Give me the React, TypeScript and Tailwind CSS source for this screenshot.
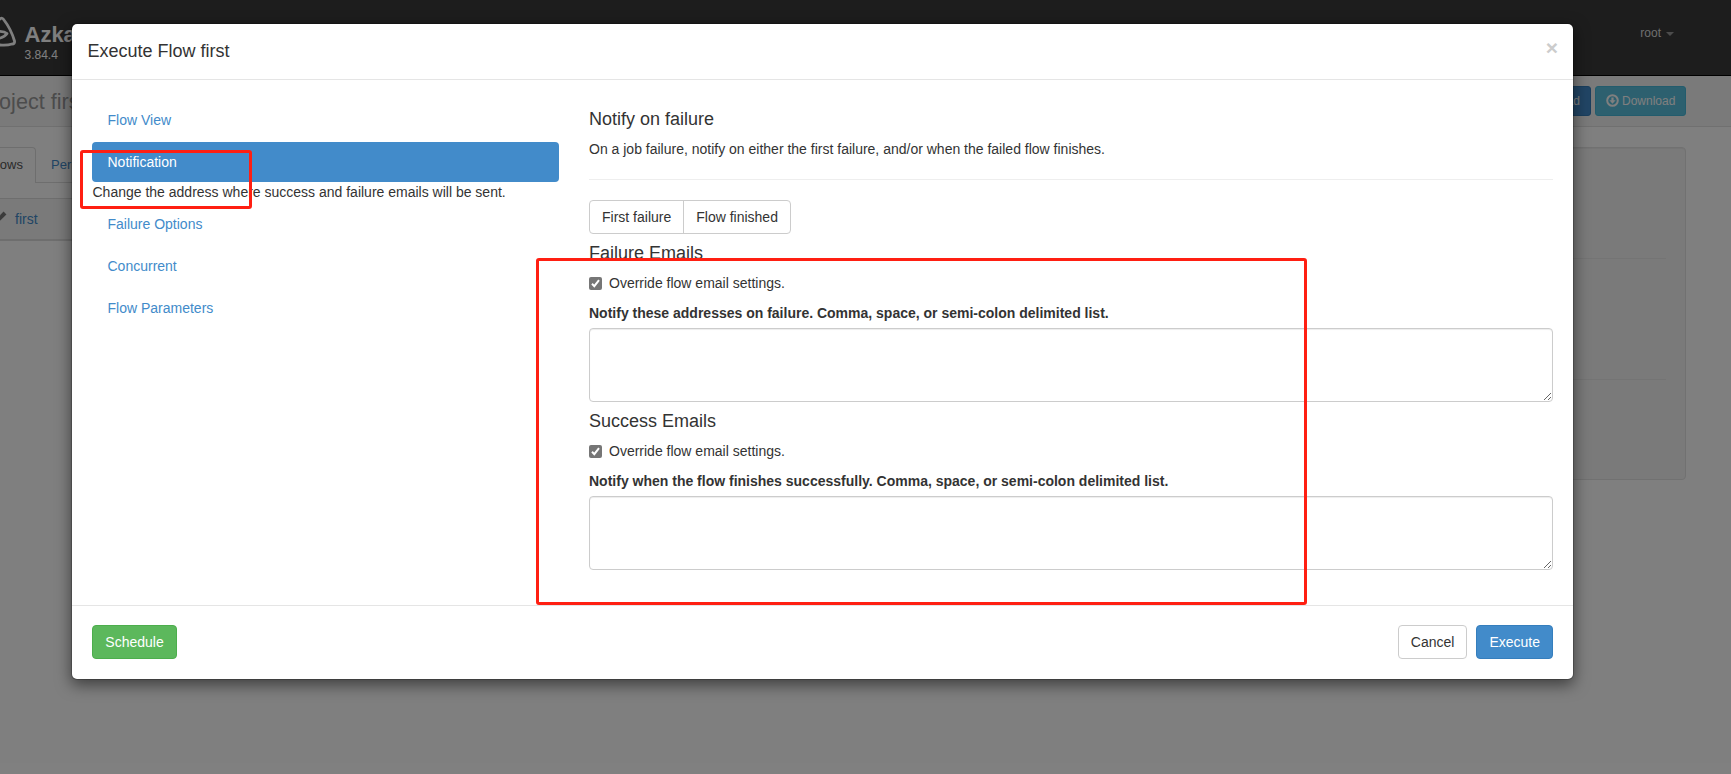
import React from 'react';

interface EmailSectionProps {
  title: string;
  label: string;
}

const EmailSection: React.FC<EmailSectionProps> = ({ title, label }) => {
  return (
    <div className="pt-[9px]">
      <h4 className="text-lg leading-5 mb-2.5">{title}</h4>
      <label className="flex h-5 mb-2.5 leading-5">
        <svg viewBox="0 0 13 13" className="w-[13px] h-[13px] mt-1 mr-[7px]">
          <rect width="13" height="13" rx="2" fill="#767676" />
          <path d="M3 6.8 L5.3 9.2 L10 3.2" fill="none" stroke="#fff" strokeWidth="2" />
        </svg>
        Override flow email settings.
      </label>
      <div className="font-bold leading-5 mb-[5px]">{label}</div>
      <textarea className="block w-full h-[74px] resize border border-[#ccc] rounded bg-white shadow-[inset_0_1px_1px_rgba(0,0,0,0.075)]" />
    </div>
  );
};

const Backdrop: React.FC = () => {
  return (
    <div className="h-[774px] overflow-hidden bg-white">
      <header className="h-[76px] bg-[#3a3a3a] border-b border-black flex justify-between">
        <div className="flex w-[237px]">
          <svg viewBox="0 0 17 32" className="w-[17px] h-8 mt-4" fill="none" stroke="#fff" strokeWidth="2.8" strokeLinejoin="round">
            <path d="M-4 6 L0 3 Q2 1 4 4 Q11 13 14.5 25 Q15 28 12 28 Q6 30 -4 28.5" />
            <path d="M-3 15.5 Q4 15 7 17.5 Q5 21 -3 23" />
          </svg>
          <div className="ml-[7.5px] mt-[22px] text-white">
            <div className="text-[22px] leading-[25px] font-bold">Azkaban</div>
            <div className="text-xs leading-4">3.84.4</div>
          </div>
        </div>
        <div className="flex items-start mr-[57px] mt-6 text-xs leading-[18px] text-[#ddd]">
          root
          <span className="ml-[5px] mt-2 border-x-4 border-t-4 border-x-transparent border-t-[#999]" />
        </div>
      </header>

      <div className="h-[51px] bg-[#f5f5f5] border-b border-[#e0e0e0] flex justify-between">
        <h1 className="-ml-[22.5px] mt-[11px] text-[21.6px] leading-[30px] text-[#999]">Project first</h1>
        <div className="flex mt-2.5 mr-[45px] gap-1 text-xs text-white">
          <div className="flex items-center h-[30px] px-2.5 rounded-[3px] bg-[#428bca] border border-[#357ebd]">Upload</div>
          <div className="flex items-center w-[91px] h-[30px] pl-2.5 gap-[3px] rounded-[3px] bg-[#5bc0de] border border-[#46b8da]">
            <svg viewBox="0 0 13 13" className="w-[13px] h-[13px] -mt-0.5">
              <circle cx="6.5" cy="6.5" r="5.3" fill="none" stroke="#fff" strokeWidth="2" />
              <path d="M5.4 3.5 H7.6 V6.3 H9.6 L6.5 9.8 L3.4 6.3 H5.4 Z" fill="#fff" />
            </svg>
            Download
          </div>
        </div>
      </div>

      <div className="flex justify-between pt-5 pr-[45px]">
        <div className="w-[1200px]">
          <div className="flex text-[13px] leading-5">
            <div className="w-9 h-9 pt-[7px] border-t border-r border-[#ddd] rounded-tr text-[#555]">
              <span className="-ml-[11px]">Flows</span>
            </div>
            <div className="flex-1 h-9 pt-2 pl-[15px] border-b border-[#ddd] text-[#428bca]">Permissions</div>
          </div>
          <div className="flex items-center mt-[15px] h-[43px] bg-[#f5f5f5] border-t border-b-2 border-[#ddd] text-sm text-[#428bca]">
            <svg viewBox="0 0 15 12" className="w-[15px] h-3 -mt-1">
              <path d="M-3 10 L5 2" stroke="#777" strokeWidth="4" />
            </svg>
            first
          </div>
        </div>
        <div className="w-[360px] h-[333px] px-[19px] rounded bg-[#f5f5f5] border border-[#e3e3e3] shadow-[inset_0_1px_1px_rgba(0,0,0,0.05)]">
          <div className="h-[111px] border-b border-[#e8e8e8]" />
          <div className="h-[121px] border-b border-[#e8e8e8]" />
        </div>
      </div>
    </div>
  );
};

const App: React.FC = () => {
  const after = ['Failure Options', 'Concurrent', 'Flow Parameters'];

  return (
    <div className="relative h-[774px] overflow-hidden font-['Liberation_Sans',Arial,sans-serif] text-sm text-[#333]">
      <Backdrop />
      <div className="absolute inset-0 bg-black/50" />

      <div className="absolute left-[71px] top-[23px] w-[1503px] h-[657px] flex flex-col rounded-md bg-white bg-clip-padding border border-black/20 shadow-[0_5px_15px_rgba(0,0,0,0.5)]">
        <div className="flex justify-between h-14 pl-[15.5px] pr-[15px] pt-[15px] border-b border-[#e5e5e5]">
          <h4 className="text-lg leading-[25px]">Execute Flow first</h4>
          <span className="text-[21px] leading-[21px] -mt-0.5 font-bold text-[#ccc]">×</span>
        </div>

        <div className="flex-1 flex gap-[30px] px-5 pt-5">
          <ul className="w-[467px] flex flex-col gap-0.5 leading-5 text-[#428bca]">
            <li className="px-[15.5px] py-2.5">Flow View</li>
            <li>
              <div className="px-[15.5px] py-2.5 rounded bg-[#428bca] text-white">Notification</div>
              <p className="pl-[0.5px] text-[#333]">Change the address where success and failure emails will be sent.</p>
            </li>
            {after.map((item) => (
              <li key={item} className="px-[15.5px] py-2.5">{item}</li>
            ))}
          </ul>

          <div className="flex-1">
            <h4 className="mt-[9px] text-lg leading-5">Notify on failure</h4>
            <p className="mt-2.5 leading-5">On a job failure, notify on either the first failure, and/or when the failed flow finishes.</p>
            <hr className="my-5 border-[#eee]" />
            <div className="inline-flex h-[34px] leading-8 align-top border border-[#ccc] rounded">
              <div className="px-3 border-r border-[#ccc]">First failure</div>
              <div className="px-3">Flow finished</div>
            </div>
            <EmailSection title="Failure Emails" label="Notify these addresses on failure. Comma, space, or semi-colon delimited list." />
            <EmailSection title="Success Emails" label="Notify when the flow finishes successfully. Comma, space, or semi-colon delimited list." />
          </div>
        </div>

        <div className="flex h-[74px] px-5 pt-[19px] leading-8 border-t border-[#e5e5e5]">
          <button className="w-[85px] h-[34px] rounded border border-[#4cae4c] bg-[#5cb85c] text-white">Schedule</button>
          <button className="h-[34px] px-3 ml-auto rounded border border-[#ccc]">Cancel</button>
          <button className="h-[34px] px-3 ml-[9px] rounded border border-[#357ebd] bg-[#428bca] text-white">Execute</button>
        </div>
      </div>

      {/* Highlight frames */}
      <div className="absolute left-[80px] top-[150px] w-[172px] h-[59px] border-3 border-[#ff1f12] rounded-[3px]" />
      <div className="absolute left-[536px] top-[258px] w-[771px] h-[347px] border-3 border-[#ff1f12] rounded-[3px]" />
    </div>
  );
};

export default App;
